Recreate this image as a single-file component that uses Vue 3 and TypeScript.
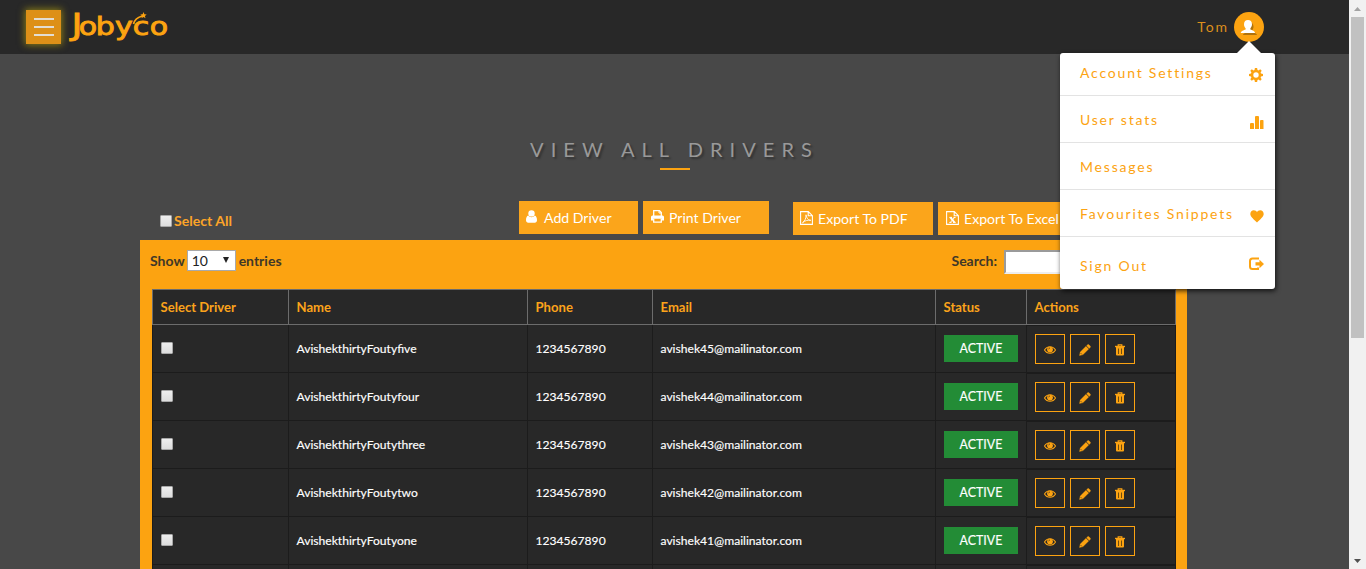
<script setup lang="ts">
interface Driver {
  name: string
  phone: string
  email: string
}

interface MenuItem {
  label: string
  icon: string
  size: string
}

const headings: string[] = ['Select Driver', 'Name', 'Phone', 'Email', 'Status', 'Actions']

const drivers: Driver[] = [
  { name: 'AvishekthirtyFoutyfive', phone: '1234567890', email: 'avishek45@mailinator.com' },
  { name: 'AvishekthirtyFoutyfour', phone: '1234567890', email: 'avishek44@mailinator.com' },
  { name: 'AvishekthirtyFoutythree', phone: '1234567890', email: 'avishek43@mailinator.com' },
  { name: 'AvishekthirtyFoutytwo', phone: '1234567890', email: 'avishek42@mailinator.com' },
  { name: 'AvishekthirtyFoutyone', phone: '1234567890', email: 'avishek41@mailinator.com' },
]

const menu: MenuItem[] = [
  { label: 'Account Settings', icon: 'cog', size: 'first' },
  { label: 'User stats', icon: 'stats', size: 'mid' },
  { label: 'Messages', icon: '', size: 'mid' },
  { label: 'Favourites Snippets', icon: 'heart', size: 'mid' },
  { label: 'Sign Out', icon: 'out', size: 'last' },
]
</script>

<template>
  <div class="screen">
    <div class="page">
      <header class="topbar">
        <div class="brand">
          <button class="burger" aria-label="Menu"><i></i><i></i><i></i></button>
          <svg class="logo" width="104" height="40" viewBox="0 0 104 40">
            <text class="logo-text" transform="translate(0 24.5) scale(1.2 1)" x="2 8.2 22.4 38.3 53.2 67.3" y="0"><tspan class="logo-j">J</tspan>obyco</text>
            <path d="M64.500 14C65.500 10 68 7.500 73 6" fill="none" stroke="#fca311" stroke-width="1.800" />
            <path d="M74.500 2l.9 2.200 2.300.2-1.800 1.500.6 2.300-2-1.200-2 1.200.5-2.300-1.700-1.500 2.300-.2z" fill="#fca311" />
          </svg>
        </div>
        <div class="account">
          <span class="user">Tom</span>
          <span class="avatar">
            <svg width="18" height="17" viewBox="0 0 18 17">
              <path d="M9.500 3.500c2.500 0 4 1.500 4 4.200 0 1.800-.8 3-1.600 4v1.200c2 .8 5 1.300 5.100 3.100H3c.1-1.800 3-2.300 4.600-3.100v-1.200c-.9-1-1.600-2.200-1.600-4 0-2.700 1.500-4.200 3.500-4.200z" fill="#b0720c" />
              <path d="M8 1c2.500 0 4 1.500 4 4.200 0 1.800-.8 3-1.600 4v1.200c2 .8 4.500 1.300 4.600 3.600H.8c.1-2.300 3-2.800 4.800-3.600V9.200C4.700 8.200 4 7 4 5.200 4 2.500 5.500 1 8 1z" fill="#fff" />
            </svg>
          </span>
          <nav class="menu">
            <a v-for="m in menu" :key="m.label" class="menu-item" :class="m.size">
              <span>{{ m.label }}</span>
              <svg v-if="m.icon === 'cog'" class="mi" width="14" height="14" viewBox="0 0 14 14">
                <path fill="#fca311" fill-rule="evenodd" d="M5.900 0h2.200l.4 2 1 .4L11.200 1.300l1.500 1.500-1.100 1.700.4 1 2 .4v2.200l-2 .4-.4 1 1.100 1.700-1.500 1.500-1.700-1.100-1 .4-.4 2H5.900l-.4-2-1-.4-1.700 1.100-1.500-1.500 1.100-1.700-.4-1-2-.4V5.900l2-.4.4-1L1.300 2.800l1.500-1.500 1.700 1.100 1-.4zM7 4.300a2.700 2.700 0 1 0 0 5.400 2.700 2.700 0 0 0 0-5.400z" />
              </svg>
              <svg v-if="m.icon === 'stats'" class="mi" width="14" height="14" viewBox="0 0 14 14">
                <path fill="#fca311" d="M0 9q0-1 1-1h2q1 0 1 1v5H0zM5 2q0-1 1-1h2q1 0 1 1v12H5zM10 6q0-1 1-1h2q.500 0 .500 1v8H10z" />
              </svg>
              <svg v-if="m.icon === 'heart'" class="mi" width="14" height="14" viewBox="0 0 14 14">
                <path fill="#fca311" d="M7 13.500C4.500 10.800.3 8 .3 5c0-2.300 1.600-3.700 3.400-3.700C5.300 1.300 6.400 2 7 3.200 7.600 2 8.700 1.300 10.300 1.300c1.800 0 3.400 1.400 3.400 3.700 0 3-4.200 5.800-6.700 8.500z" />
              </svg>
              <svg v-if="m.icon === 'out'" class="mi" width="15" height="14" viewBox="0 0 15 14">
                <path fill="none" stroke="#fca311" stroke-width="2" d="M10 1.500H3.500Q1 1.500 1 4v5.500Q1 12 3.500 12H9V10.500" />
                <path fill="#fca311" d="M6.500 5.300H10.500V2.700L15 7l-4.500 4.200V8.500h-4z" />
              </svg>
            </a>
          </nav>
        </div>
      </header>

      <main class="content">
        <h1 class="title">VIEW ALL DRIVERS</h1>
        <div class="rule"></div>

        <div class="toolbar">
          <label class="select-all"><span class="check"></span>Select All</label>
          <div class="buttons">
            <button class="btn add">
              <svg width="11" height="13" viewBox="0 0 11 13">
                <circle cx="5.500" cy="3.400" r="3.200" fill="#fff" />
                <path d="M2.300 5.500C.7 6 0 7.800 0 10.300 0 12 1 12.700 2.200 12.700h6.600C10 12.700 11 12 11 10.300 11 7.800 10.300 6 8.700 5.500 8 6.600 6.800 7.200 5.500 7.200S3 6.600 2.300 5.500z" fill="#fff" />
              </svg>
              <span>Add Driver</span>
            </button>
            <button class="btn print">
              <svg width="13" height="13" viewBox="0 0 13 13">
                <path d="M2.700 6V.7h5.800l1.800 1.800V6" fill="none" stroke="#fff" stroke-width="1.300" />
                <path d="M8 .7V3h2.300" fill="none" stroke="#fff" />
                <path d="M1.500 5.500h10Q13 5.500 13 7v3.500h-2.200V8.700H2.200v1.800H0V7q0-1.500 1.500-1.500z" fill="#fff" />
                <path d="M2.700 8.700v3.400h7.600V8.700" fill="none" stroke="#fff" stroke-width="1.300" />
              </svg>
              <span>Print Driver</span>
            </button>
            <button class="btn pdf">
              <svg width="13" height="14" viewBox="0 0 13 14">
                <path d="M.6.600H8.300l4.100 4.100v8.700H.6zM8.200.6v4.200h4.200" fill="none" stroke="#fff" stroke-width="1.100" />
                <path d="M2.500 11.700C4.800 10.400 6.300 7 6 3.800c1 4 2.200 5.400 4.800 5.500C7.500 8.900 5 9.600 2.500 11.700z" fill="none" stroke="#fff" stroke-width=".9" />
              </svg>
              <span>Export To PDF</span>
            </button>
            <button class="btn excel">
              <svg width="13" height="14" viewBox="0 0 13 14">
                <path d="M.6.600H8.300l4.100 4.100v8.700H.6zM8.200.6v4.200h4.200" fill="none" stroke="#fff" stroke-width="1.100" />
                <path d="M4.500 6.300l4 5.200" stroke="#fff" stroke-width="2" />
                <path d="M8.700 6.300l-4.400 5.200M3.300 6.400h2.700M7.400 6.400h2.200M3.300 11.400h2.300M7 11.400h2.700" stroke="#fff" stroke-width="1" />
              </svg>
              <span>Export To Excel</span>
            </button>
          </div>
        </div>

        <section class="panel">
          <div class="controls">
            <div class="length">
              <span>Show</span>
              <span class="select">10<i></i></span>
              <span>entries</span>
            </div>
            <div class="search"><span>Search:</span><span class="field"></span></div>
          </div>

          <div class="table">
            <div class="row head">
              <div v-for="h in headings" :key="h" class="cell">{{ h }}</div>
            </div>
            <div v-for="d in drivers" :key="d.name" class="row">
              <div class="cell"><span class="check"></span></div>
              <div class="cell">{{ d.name }}</div>
              <div class="cell">{{ d.phone }}</div>
              <div class="cell">{{ d.email }}</div>
              <div class="cell"><span class="badge">ACTIVE</span></div>
              <div class="cell actions">
                <button class="act" aria-label="View">
                  <svg width="12" height="10" viewBox="0 0 12 10">
                    <path d="M.5 5C3 .6 9 .6 11.500 5 9 9.400 3 9.400.5 5z" fill="none" stroke="#fca311" stroke-width="1.100" />
                    <circle cx="6" cy="4.600" r="2.900" fill="#fca311" />
                    <path d="M4.600 4.300Q4.700 3 6 2.900" fill="none" stroke="#282828" stroke-width=".6" />
                  </svg>
                </button>
                <button class="act" aria-label="Edit">
                  <svg width="12" height="12" viewBox="0 0 12 12">
                    <path d="M.5 11.500l.7-3.400L7 2.300l2.700 2.700-5.800 5.800zM7.600 1.700L8.800.6q.5-.4 1 0l1.600 1.600q.4.500 0 1L10.300 4.400z" fill="#fca311" stroke="#fca311" stroke-width=".3" />
                    <path d="M1.500 9l1.500 1.500" stroke="#282828" stroke-width=".6" />
                  </svg>
                </button>
                <button class="act" aria-label="Delete">
                  <svg width="10" height="12" viewBox="0 0 10 12">
                    <path d="M3.200 2V.8h3.600V2" fill="none" stroke="#fca311" stroke-width="1.200" />
                    <path d="M0 1.800h10v1.400H0z" fill="#fca311" />
                    <path d="M1 3h8v7.500q0 1-1 1H2q-1 0-1-1z" fill="#fca311" />
                    <path d="M3.500 4.500v5.500M6.500 4.500v5.500" stroke="#5f430f" stroke-width=".9" />
                  </svg>
                </button>
              </div>
            </div>
            <div class="row"><div v-for="h in headings" :key="h" class="cell"></div></div>
          </div>
        </section>
      </main>
    </div>

    <aside class="scrollbar">
      <svg width="17" height="17"><path d="M5 11h7L8.500 7z" fill="#a3a3a3" /></svg>
      <div class="thumb"></div>
      <svg class="down" width="17" height="17"><path d="M5 7h7L8.500 11z" fill="#505050" /></svg>
    </aside>
  </div>
</template>

<style>
body {
  margin: 0;
  overflow: hidden;
}
</style>

<style scoped>
.screen {
  display: flex;
  width: 1366px;
  height: 569px;
  overflow: hidden;
  font-family: Lato, sans-serif;
  font-size: 13px;
}
.screen * {
  box-sizing: border-box;
}
.page {
  width: 1349px;
  background: #484848;
}
button {
  font: inherit;
  padding: 0;
  margin: 0;
}
svg {
  display: block;
  flex: none;
}
.topbar {
  height: 54px;
  background: #282828;
  display: flex;
  justify-content: space-between;
}
.brand {
  display: flex;
  padding: 10px 0 0 26px;
  gap: 8px;
}
.burger {
  width: 35px;
  height: 34px;
  border: 0;
  background: #dd9018;
  box-shadow: 0 0 7px 1px rgba(190, 170, 10, 0.65);
  display: flex;
  flex-direction: column;
  align-items: center;
  padding-top: 8px;
  gap: 6px;
}
.burger i {
  width: 20px;
  height: 2px;
  background: #e2ddd3;
}
.logo {
  overflow: visible;
}
.logo-text {
  font-family: 'DejaVu Sans', sans-serif;
  font-size: 25px;
  fill: #fca311;
  stroke: #fca311;
  stroke-width: 0.9px;
}
.logo-j {
  font-size: 31px;
}
.account {
  position: relative;
  display: flex;
  align-items: flex-start;
  padding: 12px 85px 0 0;
}
.user {
  color: #dd8f1c;
  font-size: 14px;
  letter-spacing: 1.9px;
  line-height: 30px;
  margin-right: 5px;
}
.avatar {
  width: 30px;
  height: 30px;
  border-radius: 50%;
  background: #fca311;
  display: flex;
  padding: 7px 0 0 6px;
}
.menu {
  position: absolute;
  z-index: 5;
  top: 53px;
  right: 74px;
  width: 215px;
  height: 236px;
  background: #fff;
  border-radius: 3px;
  box-shadow: 1px 2px 5px rgba(0, 0, 0, 0.75);
}
.menu::before {
  content: '';
  position: absolute;
  right: 14px;
  top: -12px;
  border: 12px solid transparent;
  border-top: 0;
  border-bottom-color: #fff;
}
.menu-item {
  display: flex;
  justify-content: space-between;
  align-items: center;
  height: 47px;
  padding: 0 11px 0 20px;
  border-bottom: 1px solid #e3e3e3;
  color: #fca311;
  font-size: 14px;
  letter-spacing: 1.8px;
}
.menu-item.first {
  height: 43px;
  padding: 0 12px 3px 20px;
}
.menu-item.last {
  border: 0;
  height: 52px;
  padding-top: 5px;
}
.mi {
  margin-top: 5px;
}
.last .mi {
  margin-top: -4px;
}
.content {
  padding: 83px 162px 0 140px;
}
.title {
  margin: 0;
  padding-left: 18px;
  text-align: center;
  font-size: 20px;
  font-weight: 400;
  line-height: 24px;
  letter-spacing: 7.05px;
  margin-right: -4px;
  color: #999;
  text-shadow: 2px 2px 2px rgba(0, 0, 0, 0.3);
}
.rule {
  width: 30px;
  height: 2px;
  margin: 7px 0 0 520px;
  background: #fca311;
}
.toolbar {
  display: flex;
  height: 70px;
  padding: 31px 0 0 20px;
}
.select-all {
  display: flex;
  align-items: center;
  height: 39px;
  width: 359px;
  gap: 2px;
  color: #fca428;
  font-weight: 700;
  font-size: 14.1px;
}
.check {
  display: block;
  width: 12px;
  height: 12px;
  border: 1px solid #a8a8a8;
  border-radius: 1px;
  background: linear-gradient(#eee, #ddd);
}
.buttons {
  display: flex;
}
.btn {
  display: flex;
  align-items: center;
  height: 33px;
  border: 0;
  padding-left: 8px;
  background: #fba51b;
  color: #fff;
  font-size: 14.1px;
  white-space: nowrap;
}
.add {
  width: 119px;
  padding-left: 7px;
  gap: 7px;
}
.print {
  width: 126px;
  margin-left: 5px;
  gap: 5px;
}
.pdf {
  width: 140px;
  margin: 1px 0 0 24px;
  padding-left: 7px;
  gap: 5px;
}
.excel {
  width: 146px;
  margin: 1px 0 0 5px;
  gap: 5px;
}
.btn svg {
  margin-top: -2px;
}
.panel {
  background: #fca311;
  height: 340px;
  padding: 0 11px 0 12px;
}
.controls {
  display: flex;
  justify-content: space-between;
  height: 49px;
  padding-top: 10px;
  margin-left: -2px;
  font-size: 14px;
  font-weight: 700;
  line-height: 22px;
}
.length {
  display: flex;
  color: #403828;
}
.select {
  display: flex;
  justify-content: space-between;
  width: 49px;
  height: 21px;
  margin: 0 3px 0 2px;
  padding: 0 6px 0 4px;
  border: 1px solid #a9a9a9;
  background: #fff;
  color: #222;
  font-weight: 400;
  line-height: 20px;
}
.select i {
  margin-top: 6px;
  width: 0;
  height: 0;
  border: 3.5px solid transparent;
  border-top: 6px solid #222;
  border-bottom: 0;
}
.search {
  display: flex;
  color: #403828;
}
.field {
  width: 172px;
  height: 24px;
  margin-left: 7px;
  border: 2px inset #eee;
  background: #fff;
}
.table {
  border-top: 1px solid #6c6c6c;
}
.row {
  display: grid;
  grid-template-columns: 136px 239px 125px 283px 91px 150px;
  height: 48px;
  background: #282828;
  color: #fff;
  font-size: 12.1px;
  -webkit-text-stroke: 0.15px currentColor;
}
.cell {
  padding: 16px 0 0 7.5px;
  line-height: 16px;
  border-left: 1px solid #1c1c1c;
  border-bottom: 1px solid #1c1c1c;
}
.cell:last-child {
  border-right: 1px solid #1c1c1c;
}
.row.head {
  height: 35px;
  font-size: 13.1px;
  -webkit-text-stroke: 0;
}
.head .cell,
.head .cell:last-child {
  padding-top: 9px;
  border-color: #6c6c6c;
  color: #fba31b;
  font-weight: 700;
}
.row:not(.head) .cell:last-child {
  border-top: 1px solid #1c1c1c;
}
.cell .check {
  margin: 1px 0 0 0.5px;
}
.badge {
  display: block;
  width: 74px;
  height: 27px;
  margin: -6px 0 0 0.5px;
  background: #238c36;
  font-size: 12.4px;
  line-height: 28px;
  text-align: center;
}
.row:not(.head) .actions {
  display: flex;
  gap: 5px;
  padding: 8px 0 0 8px;
}
.act {
  width: 30px;
  height: 30px;
  border: 1px solid #fca311;
  background: transparent;
  display: flex;
  align-items: center;
  justify-content: center;
  padding-top: 2px;
}
.scrollbar {
  width: 17px;
  background: #f1f1f1;
  display: flex;
  flex-direction: column;
  align-items: center;
}
.thumb {
  width: 13px;
  height: 321px;
  background: #c1c1c1;
}
.down {
  margin-top: auto;
}
</style>
